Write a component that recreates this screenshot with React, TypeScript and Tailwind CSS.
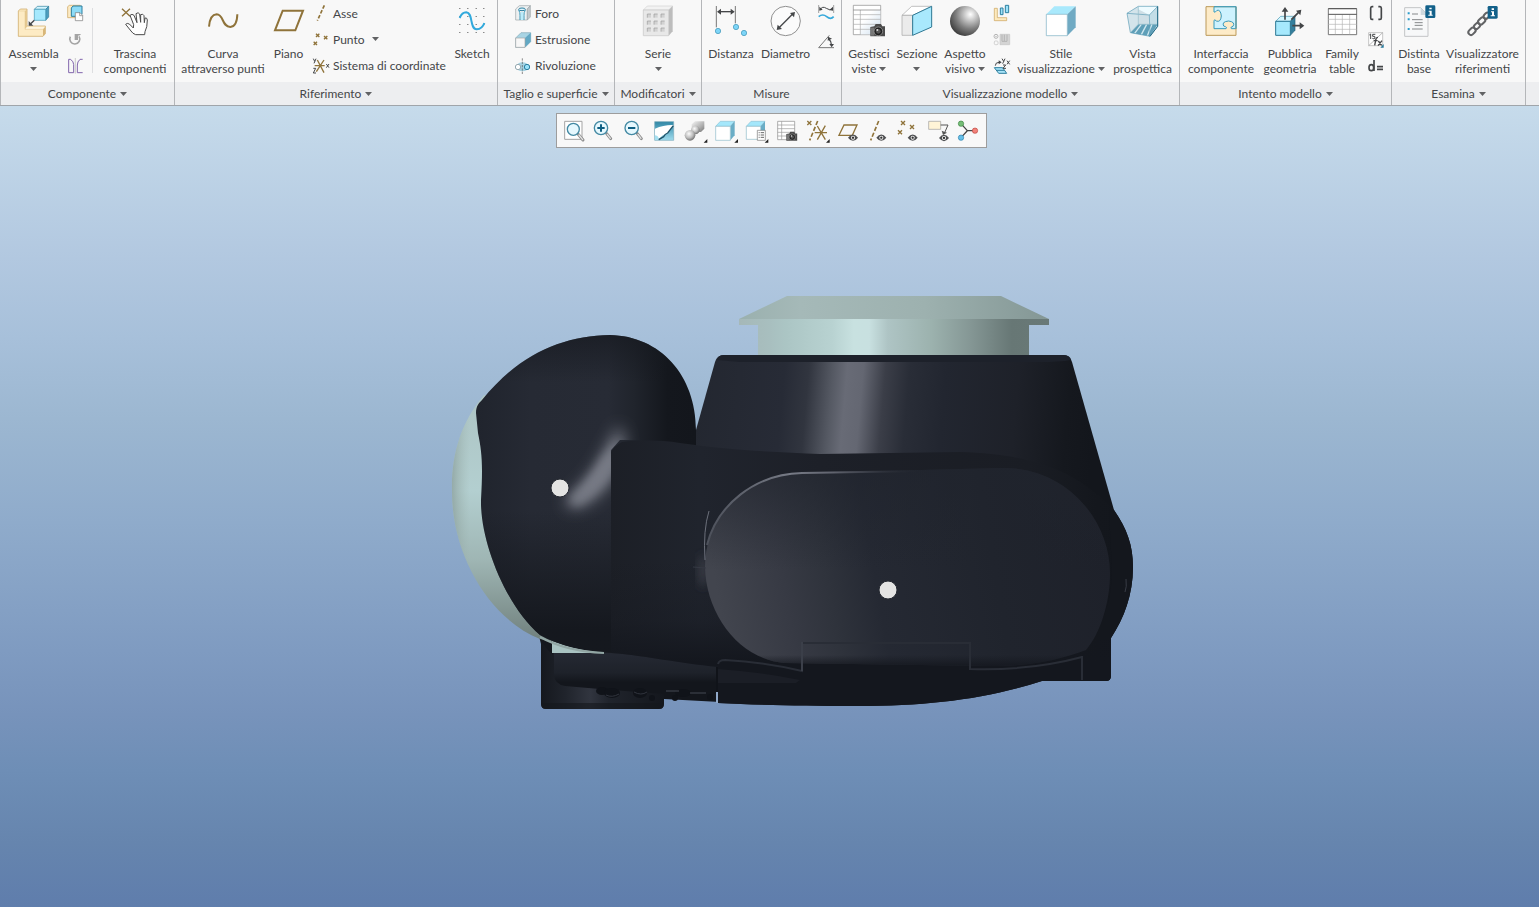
import type { ReactNode } from 'react';

const GOLD = '#8f733a';
const INK = '#444648';
const TEAL = '#2d7f9f';

function Caret({ className = '' }: { className?: string }) {
  return (
    <svg className={`inline-block shrink-0 ${className}`} width="7" height="4" viewBox="0 0 7 4" aria-hidden="true">
      <path d="M0 0H7L3.5 4Z" fill="#616264" />
    </svg>
  );
}

function Icon({ box, size = 32, children }: { box: string; size?: number; children: ReactNode }) {
  return (
    <svg className="shrink-0 overflow-visible" width={size} height={size} viewBox={box} fill="none" aria-hidden="true">
      {children}
    </svg>
  );
}

type BigProps = { className: string; icon: ReactNode; first: string; second?: string; menu?: boolean };

function BigButton({ className, icon, first, second, menu }: BigProps) {
  return (
    <button type="button" className={`flex shrink-0 flex-col items-center gap-[9px] pt-[5px] leading-[15px] whitespace-nowrap ${className}`}>
      {icon}
      <span className="flex flex-col items-center">
        <span>{first}</span>
        <span className="flex h-[15px] items-center justify-center gap-[3px]">
          {second}
          {menu && <Caret />}
        </span>
      </span>
    </button>
  );
}

function SmallButton({ icon, label, text, menu }: { icon: ReactNode; label?: string; text?: string; menu?: boolean }) {
  return (
    <button type="button" aria-label={label} className="flex h-[26px] items-center gap-1 whitespace-nowrap">
      {icon}
      {text && <span className="leading-[15px]">{text}</span>}
      {menu && <Caret className="ml-[3px]" />}
    </button>
  );
}

function SmallColumn({ className, children }: { className: string; children: ReactNode }) {
  return <div className={`flex shrink-0 flex-col ${className}`}>{children}</div>;
}

function Group({ className, title, menu = true, children }: { className: string; title: string; menu?: boolean; children: ReactNode }) {
  return (
    <section className={`flex shrink-0 flex-col border-r border-[#b4b6b9] ${className}`}>
      <div className="flex h-[82px]">{children}</div>
      <button type="button" className="flex h-[23px] items-center justify-center gap-1 bg-[#edeef0] whitespace-nowrap">
        {title}
        {menu && <Caret />}
      </button>
    </section>
  );
}

function Camera({ x, y, s = 1 }: { x: number; y: number; s?: number }) {
  return (
    <g transform={`translate(${x} ${y}) scale(${s})`}>
      <path d="M0 9L12 7L16 0H32L36 7H44V37H0Z" fill="#4b4b4b" />
      <path d="M2 11H12V35H2Z" fill="#777" />
      <circle cx="24" cy="22" r="13" fill="#202020" stroke="#aaa" strokeWidth="2" />
      <circle cx="24" cy="22" r="7" fill="#555" />
      <circle cx="21" cy="18" r="3" fill="#ddd" />
    </g>
  );
}

function InfoBadge({ x, y }: { x: number; y: number }) {
  return (
    <g transform={`translate(${x} ${y})`}>
      <rect width="30" height="38" rx="4" fill="#13618a" />
      <path d="M12 7H19V12H12ZM10 16H19V28H22V31H9V28H13V19H10Z" fill="#fff" />
    </g>
  );
}

function Cross({ x, y, r = 5, w = 4 }: { x: number; y: number; r?: number; w?: number }) {
  return <path d={`M${x - r} ${y - r}L${x + r} ${y + r}M${x + r} ${y - r}L${x - r} ${y + r}`} stroke={GOLD} strokeWidth={w} />;
}

function ComponentGroup() {
  return (
    <Group className="w-[175px] border-l" title="Componente">
      <BigButton
        className="w-[65px]"
        first="Assembla"
        menu
        icon={
          <Icon box="52 15 96 96">
            <path d="M53 33L59 27H79V78H134V101L127 109H53Z" fill="#fdebc4" stroke="#c9a057" strokeWidth="2" />
            <path d="M73 33L79 27V80L73 88Z" fill="#e5c88f" />
            <path d="M73 88L80 80H134L127 88Z" fill="#fff6df" />
            <path d="M127 88L134 80V101L127 109Z" fill="#d8b678" />
            <path d="M53 33H73V88H127" stroke="#e0c48e" strokeWidth="1.5" />
            <path d="M101 28L110 19H144L135 28Z" fill="#d3f5ff" stroke="#2f7f9c" strokeWidth="2" />
            <path d="M135 28L144 19V51L135 61Z" fill="#4d9dbd" stroke="#2f7f9c" strokeWidth="2" />
            <path d="M101 28H135V61H101Z" fill="#a6e9fd" stroke="#4197b5" strokeWidth="2" />
            <path d="M101 61L90 71" stroke={INK} strokeWidth="4" />
            <path d="M84 77V63L98 77Z" fill={INK} />
          </Icon>
        }
      />
      <SmallColumn className="w-[26px] pl-px">
        <SmallButton
          label="Crea componente"
          icon={
            <Icon size={16} box="201 15 48 48">
              <path d="M203 20L208 16H241V53H203Z" fill="#fdebc4" stroke="#c9a057" strokeWidth="2" />
              <path d="M214 24L219 18H246V42L240 49H214Z" fill="#8edcf7" stroke={TEAL} strokeWidth="3" />
              <path d="M226 38H240L248 46V62H226Z" fill="#fff" stroke="#777" strokeWidth="2" />
              <path d="M239 38V47H248" stroke="#777" strokeWidth="2" />
            </Icon>
          }
        />
        <SmallButton
          label="Rigenera"
          icon={
            <Icon size={16} box="201 93 48 48">
              <path d="M211 110A15 15 0 1 0 237 109" stroke="#a4a4a4" strokeWidth="5" />
              <path d="M224 102H243L240 106L234 107V120H224Z" fill="#a4a4a4" />
            </Icon>
          }
        />
        <SmallButton
          label="Specchia componente"
          icon={
            <Icon size={16} box="201 171 48 48">
              <path d="M206 178H212Q221 185 221 194V218H206Z" stroke="#8265ad" strokeWidth="3" />
              <path d="M248 178H240Q232 185 232 195V218H248" stroke="#8265ad" strokeWidth="3" />
              <path d="M226 174V221" stroke="#b5b5b5" strokeWidth="2" />
            </Icon>
          }
        />
      </SmallColumn>
      <div className="mt-2 h-[65px] w-px shrink-0 bg-[#dddee0]" />
      <BigButton
        className="ml-[3px] w-[78px]"
        first="Trascina"
        second="componenti"
        icon={
          <Icon box="355 15 96 96">
            <path d="M364 26L388 49M388 26L364 49" stroke={GOLD} strokeWidth="4" />
            <path
              d="M405 104H432L433 95Q440 82 440 60Q439 52 433 54L431 68L430 47Q427 40 420 44L420 67L417 42Q413 35 406 41L409 68L400 46Q394 40 388 46L399 74L398 84L386 72Q379 68 375 73L391 93Q396 101 405 104Z"
              fill="#fff"
              stroke="#4b4b4b"
              strokeWidth="3"
              strokeLinejoin="round"
            />
          </Icon>
        }
      />
    </Group>
  );
}

function ReferenceGroup() {
  return (
    <Group className="w-[323px]" title="Riferimento">
      <BigButton
        className="w-24"
        first="Curva"
        second="attraverso punti"
        icon={
          <Icon box="621 15 96 96">
            <path d="M627 80Q630 44 650 43C672 43 665 81 691 81Q711 80 712 43" stroke={GOLD} strokeWidth="6" />
          </Icon>
        }
      />
      <BigButton
        className="w-[35px]"
        first="Piano"
        icon={
          <Icon box="817 15 96 96">
            <path d="M846 32H907L884 91H823Z" stroke={GOLD} strokeWidth="6" />
          </Icon>
        }
      />
      <SmallColumn className="w-[148px] pl-[7px]">
        <SmallButton
          text="Asse"
          icon={
            <Icon size={16} box="39 15 48 48">
              <path d="M73 16L52 62" stroke={GOLD} strokeWidth="5" strokeDasharray="11 5" />
            </Icon>
          }
        />
        <SmallButton
          text="Punto"
          menu
          icon={
            <Icon size={16} box="39 93 48 48">
              <Cross x={53} y={106} />
              <Cross x={77} y={113} />
              <Cross x={46} y={130} />
            </Icon>
          }
        />
        <SmallButton
          text="Sistema di coordinate"
          icon={
            <Icon size={16} box="39 171 48 48">
              <path d="M44 197H74M49 215L72 180M52 180L72 218" stroke={GOLD} strokeWidth="4" />
              <path d="M40 176L44 184M48 176L42 190M40 205H47L40 219H48M79 192L87 203M87 192L79 203" stroke={INK} strokeWidth="3" />
            </Icon>
          }
        />
      </SmallColumn>
      <BigButton
        className="w-9"
        first="Sketch"
        icon={
          <Icon box="468 15 96 96">
            {[26, 50, 74, 98].map((y) =>
              [479, 503, 528, 551].map((x) => <rect key={`${x}-${y}`} x={x - 1} y={y - 2} width="3" height="3" fill="#555" />),
            )}
            <path d="M479 54Q486 37 499 37C520 38 508 87 530 88Q547 87 553 69" stroke="#31a9dc" strokeWidth="6" />
          </Icon>
        }
      />
    </Group>
  );
}

function CutGroup() {
  return (
    <Group className="w-[117px]" title="Taglio e superficie">
      <SmallColumn className="w-full pl-[17px]">
        <SmallButton
          text="Foro"
          icon={
            <Icon size={16} box="645 15 48 48">
              <path d="M647 27L658 17H691L682 27V60H647Z" fill="#edf0f1" stroke="#9ba4a8" strokeWidth="2" />
              <path d="M682 27L691 17V51L682 60Z" fill="#c2c8cb" stroke="#9ba4a8" strokeWidth="2" />
              <ellipse cx="666" cy="28" rx="10" ry="4" fill="#dff6ff" stroke={TEAL} strokeWidth="3" />
              <path d="M656 30Q661 38 660 46V60M676 30Q671 38 672 46V60" stroke="#3b9bbd" strokeWidth="3" />
              <path d="M663 36V60H669V36Z" fill="#b9ecfb" />
            </Icon>
          }
        />
        <SmallButton
          text="Estrusione"
          icon={
            <Icon size={16} box="645 93 48 48">
              <path d="M647 114L663 98H692V125L675 142H647Z" fill="#a8d4e4" stroke="#84a9b7" strokeWidth="2" />
              <path d="M675 114L692 98V125L675 142Z" fill="#62a8c4" />
              <path d="M647 114H675V142H647Z" fill="#f7f7f7" stroke="#a3a3a3" strokeWidth="2" />
            </Icon>
          }
        />
        <SmallButton
          text="Rivoluzione"
          icon={
            <Icon size={16} box="645 171 48 48">
              <path d="M655 190Q667 183 680 190V211Q667 217 655 211Z" fill="#a5d2e2" />
              <circle cx="654" cy="201" r="8" fill="#fff" stroke="#96aab2" strokeWidth="3" />
              <circle cx="681" cy="201" r="8" fill="#99e2fa" stroke={TEAL} strokeWidth="3" />
              <path d="M667 175V222" stroke="#555" strokeWidth="2" strokeDasharray="7 3" />
            </Icon>
          }
        />
      </SmallColumn>
    </Group>
  );
}

function ModifierGroup() {
  return (
    <Group className="w-[87px]" title="Modificatori">
      <BigButton
        className="w-[86px]"
        first="Serie"
        menu
        icon={
          <Icon box="126 15 96 96">
            <path d="M130 30L142 18H218L206 30Z" fill="#f2f2f2" stroke="#d2d2d2" strokeWidth="2" />
            <path d="M206 30L218 18V94L206 107Z" fill="#bdbdbd" />
            <path d="M130 30H206V107H130Z" fill="#e8e8e8" stroke="#c6c6c6" strokeWidth="2" />
            {[42, 63, 84].map((y) =>
              [142, 162, 183].map((x) => (
                <g key={`${x}-${y}`}>
                  <rect x={x} y={y} width="11" height="11" fill="#d2d2d2" />
                  <path d={`M${x} ${y + 11}V${y}H${x + 11}`} stroke="#9c9c9c" strokeWidth="2" />
                </g>
              )),
            )}
          </Icon>
        }
      />
    </Group>
  );
}

function MeasureGroup() {
  return (
    <Group className="w-[140px]" title="Misure" menu={false}>
      <BigButton
        className="w-[58px]"
        first="Distanza"
        icon={
          <Icon box="345 15 96 96">
            <path d="M349 18V82M406 18V70" stroke="#777" strokeWidth="3" />
            <path d="M356 35H400" stroke={INK} strokeWidth="4" />
            <path d="M351 35L363 26V44ZM404 35L392 26V44Z" fill={INK} />
            {[
              [354, 93],
              [408, 81],
              [432, 99],
            ].map(([x, y]) => (
              <circle key={x} cx={x} cy={y} r="8" fill="#7dd5f8" stroke="#3c93b4" strokeWidth="2" />
            ))}
          </Icon>
        }
      />
      <BigButton
        className="w-[51px]"
        first="Diametro"
        icon={
          <Icon box="508 15 96 96">
            <circle cx="555" cy="63" r="44" fill="#fbfbfb" stroke="#909090" strokeWidth="3" />
            <path d="M535 83L576 42" stroke={INK} strokeWidth="4" />
            <path d="M528 90L531 74L544 87ZM583 36L568 39L580 52Z" fill={INK} />
          </Icon>
        }
      />
      <SmallColumn className="pl-[7px]">
        <SmallButton
          label="Lunghezza"
          icon={
            <Icon size={16} box="654 15 48 48">
              <path d="M656 15V39M701 15V39" stroke="#777" strokeWidth="2" />
              <path d="M660 29Q667 17 679 25T697 27" stroke={INK} strokeWidth="3" />
              <path d="M658 32V20L668 29ZM699 32V20L688 30Z" fill={INK} />
              <path d="M656 50Q668 40 680 50T701 50" stroke="#36a9db" strokeWidth="5" />
            </Icon>
          }
        />
        <SmallButton
          label="Angolo"
          icon={
            <Icon size={16} box="654 93 48 48">
              <path d="M688 106L656 143H702" stroke="#777" strokeWidth="3" />
              <path d="M686 117Q693 122 694 134" stroke={INK} strokeWidth="4" />
              <path d="M683 122L684 110L696 116ZM688 132H702L695 142Z" fill={INK} />
            </Icon>
          }
        />
      </SmallColumn>
    </Group>
  );
}

function DisplayGroup() {
  return (
    <Group className="w-[338px]" title="Visualizzazione modello">
      <BigButton
        className="w-[54px]"
        first="Gestisci"
        second="viste"
        menu
        icon={
          <Icon box="759 15 96 96">
            <path d="M760 16H842V104H760Z" fill="#fff" stroke="#8a8a8a" strokeWidth="2" />
            <path d="M781 30H841V103H781Z" fill="url(#tableTint)" />
            <path d="M781 30V104M760 44H842M760 58H842M760 73H842M760 88H842" stroke="#aaa" strokeWidth="2" />
            <path d="M760 30H842" stroke="#777" strokeWidth="2" />
            <Camera x={811} y={72} />
          </Icon>
        }
      />
      <BigButton
        className="w-[42px]"
        first="Sezione"
        menu
        icon={
          <Icon box="3 15 96 96">
            <path d="M6 46L35 19H95L38 46Z" fill="#fff" stroke="#a5a5a5" strokeWidth="2" />
            <path d="M6 46H38V106H6Z" fill="#ebebeb" stroke="#a5a5a5" strokeWidth="2" />
            <path d="M38 46L95 19V81L38 106Z" fill="#a9e9fd" stroke="#2e7894" strokeWidth="3" />
          </Icon>
        }
      />
      <BigButton
        className="w-[54px]"
        first="Aspetto"
        second="visivo"
        menu
        icon={
          <Icon box="147 15 96 96">
            <circle cx="195" cy="63" r="45" fill="url(#sphere)" />
          </Icon>
        }
      />
      <SmallColumn className="w-5 pl-0.5">
        <SmallButton
          label="Vista esplosa"
          icon={
            <Icon size={16} box="282 15 48 48">
              <path d="M283 25H292V53H320V62H283Z" fill="#fdeabf" stroke="#c9a057" strokeWidth="2" />
              <path d="M301 24H309V44H301ZM316 16H326V38H316Z" fill="#9ce2fa" stroke={TEAL} strokeWidth="3" />
            </Icon>
          }
        />
        <SmallButton
          label="Stato combinato"
          icon={
            <Icon size={16} box="282 93 48 48">
              <circle cx="288" cy="109" r="6" stroke="#b4b4b4" strokeWidth="3" />
              <circle cx="288" cy="109" r="2" fill="#aaa" />
              <rect x="283" y="123" width="11" height="11" rx="3" stroke="#c0c0c0" strokeWidth="2" />
              <path d="M300 103H329V134H300Z" fill="#d4d4d4" stroke="#c4c4c4" strokeWidth="2" />
              <path d="M306 104V124H321V104M313 104V123" stroke="#b4b4b4" strokeWidth="3" />
            </Icon>
          }
        />
        <SmallButton
          label="Orientamento"
          icon={
            <Icon size={16} box="282 171 48 48">
              <path d="M283 203H308L320 220H296ZM289 211H313" fill="#a9e4f8" stroke={TEAL} strokeWidth="3" />
              <path d="M286 197Q286 187 297 187" stroke={INK} strokeWidth="3" />
              <path d="M296 181L305 187L296 193Z" fill={INK} />
              <path d="M306 176L311 184M315 176L308 191M321 182L329 193M329 182L321 193M309 195H317L309 205H318" stroke={INK} strokeWidth="3" />
            </Icon>
          }
        />
      </SmallColumn>
      <BigButton
        className="w-[98px]"
        first="Stile"
        second="visualizzazione"
        menu
        icon={
          <Icon box="435 15 96 96">
            <path d="M439 43L463 19H527L502 43Z" fill="#a9e9fc" />
            <path d="M502 43L527 19V82L502 107Z" fill="#70aac3" />
            <path d="M439 43H502V107H439Z" fill="#fff" stroke="#79aec3" strokeWidth="2" />
          </Icon>
        }
      />
      <BigButton
        className="w-[65px]"
        first="Vista"
        second="prospettica"
        icon={
          <Icon box="679 15 96 96">
            <path d="M679 40L713 19H771L746 45Z" fill="#eefbff" />
            <path d="M679 40L713 19V73L689 98Z" fill="#d3e4eb" />
            <path d="M713 28L746 45V73H713Z" fill="#cfdfe6" />
            <path d="M746 45L771 19V79L748 109Z" fill="#c3dde7" />
            <path d="M713 73H771L748 109L689 98Z" fill="#5f9fb8" />
            <path d="M722 73L702 100M738 73L722 104M754 73L740 107" stroke="#cfe7ef" strokeWidth="4" />
            <path d="M679 40L746 45L771 19V79L748 109L689 98ZM679 40L713 19H771M746 45L748 109" stroke="#5b9cb5" strokeWidth="2" />
            <path d="M713 19V73L689 98M713 73H771" stroke="#8fb9c9" strokeWidth="2" />
            <path d="M771 19V79L748 109" stroke="#236984" strokeWidth="3" />
          </Icon>
        }
      />
    </Group>
  );
}

function IntentGroup() {
  return (
    <Group className="w-[212px]" title="Intento modello">
      <BigButton
        className="w-[82px]"
        first="Interfaccia"
        second="componente"
        icon={
          <Icon box="74 15 96 96">
            <path d="M77 20H167V106H77Z" fill="#fdebc8" />
            <path
              d="M101 20H167V86H153Q148 82 158 79Q166 66 145 63Q123 65 130 78Q143 82 137 86H101V61Q103 57 108 63Q121 68 123 48Q121 28 110 31Q104 39 101 36Z"
              fill="#cdf2fe"
              stroke="#3999bb"
              strokeWidth="3"
            />
            <path d="M77 20H167V106H77Z" stroke="#bb995a" strokeWidth="3" />
            <path d="M101 20H167V86" stroke="#3ca0c4" strokeWidth="3" />
          </Icon>
        }
      />
      <BigButton
        className="w-14"
        first="Pubblica"
        second="geometria"
        icon={
          <Icon box="282 15 96 96">
            <path d="M287 64L302 49H345L331 64Z" fill="#d5f6ff" stroke="#4294af" strokeWidth="2" />
            <path d="M331 64L345 49V91L331 106Z" fill="#347f9d" stroke="#245f77" strokeWidth="2" />
            <path d="M287 64H331V106H287Z" fill="#a6e9fd" stroke="#2c7893" strokeWidth="3" />
            <path d="M315 59V31M334 59L355 38M337 77H363" stroke={INK} strokeWidth="5" />
            <path d="M315 21L305 35H325ZM364 29L348 32L361 46ZM373 77L359 67V88Z" fill={INK} />
          </Icon>
        }
      />
      <BigButton
        className="w-12"
        first="Family"
        second="table"
        icon={
          <Icon box="438 15 96 96">
            <path d="M445 26H530V104H445Z" fill="#fff" stroke="#777" strokeWidth="3" />
            <path d="M466 44V103M487 44V103M509 44V103M445 58H530M445 73H530M445 88H530" stroke="#b5b5b5" strokeWidth="2" />
            <path d="M445 43H530" stroke="#555" strokeWidth="3" />
            <path d="M445 26H530" stroke="#555" strokeWidth="3" />
          </Icon>
        }
      />
      <SmallColumn className="w-5 pl-0.5">
        <SmallButton
          label="Parametri"
          icon={
            <Icon size={16} box="564 15 48 48">
              <path d="M580 20H576Q572 20 572 25V53Q572 58 576 58H580M595 20H600Q604 20 604 25V53Q604 58 600 58H595" stroke={INK} strokeWidth="5" />
            </Icon>
          }
        />
        <SmallButton
          label="Relazioni tra quote"
          icon={
            <Icon size={16} box="564 93 48 48">
              <path d="M566 98H608V137H566Z" fill="#fff" stroke="#aaa" strokeWidth="2" />
              <path d="M608 98L566 137" stroke="#999" strokeWidth="2" />
              <path d="M568 105L572 102V117M586 103H578V109Q587 107 585 114Q582 118 577 115" stroke={INK} strokeWidth="3" />
              <path d="M594 112Q588 112 587 121L584 136M581 122H593M595 123L605 136M606 122L594 137" stroke={INK} strokeWidth="4" />
              <path d="M611 132V143H601Z" fill="#26789a" />
            </Icon>
          }
        />
        <SmallButton
          label="Relazioni"
          icon={
            <Icon size={16} box="564 171 48 48">
              <path d="M582 180V213" stroke={INK} strokeWidth="5" />
              <ellipse cx="574" cy="203" rx="7" ry="9" stroke={INK} strokeWidth="5" />
              <path d="M591 200H609M591 208H609" stroke={INK} strokeWidth="5" />
            </Icon>
          }
        />
      </SmallColumn>
    </Group>
  );
}

function InvestigateGroup() {
  return (
    <Group className="w-[134px]" title="Esamina">
      <BigButton
        className="w-[54px]"
        first="Distinta"
        second="base"
        icon={
          <Icon box="669 15 96 96">
            <path d="M674 23H722L744 45V109H674Z" fill="#f7f8f9" stroke="#c3c5c7" strokeWidth="3" />
            <path d="M722 23L744 45H722Z" fill="#cfd9de" />
            <path d="M683 37H689V43H683ZM683 55H689V61H683ZM683 84H689V90H683Z" fill="#2b9dcc" />
            <path d="M696 42H714M696 59H728M704 68H728M704 76H728M696 87H728" stroke="#85888a" strokeWidth="3" />
            <InfoBadge x={736} y={16} />
          </Icon>
        }
      />
      <BigButton
        className="w-[73px]"
        first="Visualizzatore"
        second="riferimenti"
        icon={
          <Icon box="859 15 96 96">
            <g stroke="#626365" strokeWidth="6">
              <rect x="-12" y="-8" width="24" height="16" rx="8" transform="translate(874 94) rotate(-45)" />
              <rect x="-10" y="-7" width="20" height="14" rx="7" transform="translate(889 78) rotate(-45)" />
              <rect x="-12" y="-8" width="24" height="16" rx="8" transform="translate(903 63) rotate(-45)" />
              <rect x="-10" y="-7" width="20" height="14" rx="7" transform="translate(918 47) rotate(-45)" />
            </g>
            <InfoBadge x={921} y={18} />
          </Icon>
        }
      />
    </Group>
  );
}

function Lens({ cx, cy, r }: { cx: number; cy: number; r: number }) {
  return (
    <g>
      <path d={`M${cx + r - 3} ${cy + r - 3}L${cx + 29} ${cy + 32}`} stroke="#8c8c8c" strokeWidth="9" strokeLinecap="round" />
      <path d={`M${cx + r - 1} ${cy + r - 1}L${cx + 28} ${cy + 31}`} stroke="#e4e4e4" strokeWidth="4" strokeLinecap="round" />
      <circle cx={cx} cy={cy} r={r} fill="#e6f8fe" stroke="#4389a3" strokeWidth="4" />
    </g>
  );
}

function Eye({ x, y }: { x: number; y: number }) {
  return (
    <g>
      <path d={`M${x - 15} ${y}Q${x} ${y - 19} ${x + 15} ${y}Q${x} ${y + 19} ${x - 15} ${y}Z`} fill="#4e4f51" />
      <circle cx={x} cy={y} r="6" fill="#fff" />
      <circle cx={x} cy={y} r="3.5" fill="#333" />
    </g>
  );
}

function MenuCorner({ x, y }: { x: number; y: number }) {
  return <path d={`M${x} ${y}V${y - 11}L${x - 11} ${y}Z`} fill="#222" />;
}

const viewTools: { label: string; box: string; art: ReactNode }[] = [
  {
    label: 'Riadatta',
    box: '33 31 72 72',
    art: (
      <>
        <path d="M44 38H96V92H44Z" stroke="#a4a4a4" strokeWidth="3" fill="#fff" />
        <Lens cx={70} cy={62} r={18} />
      </>
    ),
  },
  {
    label: 'Zoom avanti',
    box: '124 31 72 72',
    art: (
      <>
        <Lens cx={154} cy={58} r={20} />
        <path d="M143 58H165M154 47V69" stroke="#0e5f83" strokeWidth="6" />
      </>
    ),
  },
  {
    label: 'Zoom indietro',
    box: '215 31 72 72',
    art: (
      <>
        <Lens cx={244} cy={58} r={20} />
        <path d="M233 58H255" stroke="#0e5f83" strokeWidth="6" />
      </>
    ),
  },
  {
    label: 'Ridisegna',
    box: '306 31 72 72',
    art: (
      <>
        <path d="M314 39H371V95H314Z" fill="url(#repaint)" stroke="#7fabbb" strokeWidth="2" />
        <path d="M315 60Q342 48 370 49V52L353 74Q337 78 324 94H315Z" fill="#fff" />
        <path d="M315 80Q328 82 326 94H315Z" fill="#a5e0f1" />
        <path d="M370 51L353 73Q345 76 341 84L326 93" stroke="#1d5268" strokeWidth="4" />
      </>
    ),
  },
  {
    label: 'Qualità rendering',
    box: '397 31 72 72',
    art: (
      <>
        <path d="M423 47L433 38H461V60L451 70H423Z" fill="url(#metal)" />
        <circle cx="434" cy="64" r="13" fill="url(#ball)" />
        <circle cx="418" cy="80" r="16" fill="url(#ball)" />
        <MenuCorner x={470} y={102} />
      </>
    ),
  },
  {
    label: 'Stile di visualizzazione',
    box: '489 31 72 72',
    art: (
      <>
        <path d="M497 53L511 38H554L541 53Z" fill="#a4e7fb" stroke="#8fc3d4" strokeWidth="2" />
        <path d="M541 53L554 38V80L541 95Z" fill="#6aadc6" />
        <path d="M497 53H541V95H497Z" fill="#fff" stroke="#8db9c8" strokeWidth="2" />
        <MenuCorner x={564} y={102} />
      </>
    ),
  },
  {
    label: 'Orientamenti salvati',
    box: '580 31 72 72',
    art: (
      <>
        <path d="M590 53L604 38H646L633 53Z" fill="#a4e7fb" stroke="#8fc3d4" strokeWidth="2" />
        <path d="M633 53L646 38V80L633 92Z" fill="#6aadc6" />
        <path d="M590 53H633V92H590Z" fill="#fff" stroke="#8db9c8" strokeWidth="2" />
        <path d="M623 65H647V95H623Z" fill="#fff" stroke="#777" strokeWidth="2" />
        <path d="M627 72H630M633 72H643M627 79H630M633 79H643M627 86H630M633 86H643" stroke="#666" strokeWidth="3" />
        <MenuCorner x={656} y={102} />
      </>
    ),
  },
  {
    label: 'Gestione viste',
    box: '26 31 72 72',
    art: (
      <>
        <path d="M37 38H88V93H37Z" fill="#fff" stroke="#8a8a8a" strokeWidth="2" />
        <path d="M49 38V93M37 49H88M37 60H88M37 71H88M37 82H88" stroke="#999" strokeWidth="2" />
        <Camera x={63} y={69} s={0.74} />
      </>
    ),
  },
  {
    label: 'Filtri riferimenti',
    box: '117 31 72 72',
    art: (
      <>
        <Cross x={133} y={43} r={6} />
        <path d="M158 37L134 95" stroke={GOLD} strokeWidth="5" strokeDasharray="13 6" />
        <path d="M149 72H186M157 93L181 51M157 52L181 93" stroke={GOLD} strokeWidth="4" />
        <MenuCorner x={194} y={102} />
      </>
    ),
  },
  {
    label: 'Visualizza piani',
    box: '208 31 72 72',
    art: (
      <>
        <path d="M238 49H277L263 80H223Z" stroke={GOLD} strokeWidth="4" />
        <Eye x={265} y={87} />
      </>
    ),
  },
  {
    label: 'Visualizza assi',
    box: '299 31 72 72',
    art: (
      <>
        <path d="M340 37L316 95" stroke={GOLD} strokeWidth="5" strokeDasharray="13 6" />
        <Eye x={348} y={87} />
      </>
    ),
  },
  {
    label: 'Visualizza punti',
    box: '391 31 72 72',
    art: (
      <>
        <Cross x={415} y={43} r={6} />
        <Cross x={442} y={55} r={6} />
        <Cross x={406} y={71} r={6} />
        <Eye x={444} y={87} />
      </>
    ),
  },
  {
    label: 'Visualizza annotazioni',
    box: '482 31 72 72',
    art: (
      <>
        <path d="M490 38H526V62H490Z" fill="#fff4d7" stroke="#9d9d9d" strokeWidth="2" />
        <path d="M526 49H548L538 72" stroke="#555" strokeWidth="3" />
        <path d="M533 79L529 66L545 72Z" fill="#555" />
        <Eye x={536} y={88} />
      </>
    ),
  },
  {
    label: 'Centro di rotazione',
    box: '573 31 72 72',
    art: (
      <>
        <path d="M588 45L607 66L588 87M607 66H629" stroke="#454545" strokeWidth="4" />
        <circle cx="588" cy="45" r="8" fill="#76be78" stroke="#3b8340" strokeWidth="2" />
        <circle cx="588" cy="87" r="8" fill="#66bfe8" stroke="#2b7eaa" strokeWidth="2" />
        <circle cx="630" cy="66" r="8" fill="#f28179" stroke="#bd4740" strokeWidth="2" />
      </>
    ),
  },
];

function SharedPaints() {
  return (
    <svg className="absolute size-0" aria-hidden="true">
      <defs>
        <radialGradient id="sphere" cx="0.68" cy="0.28" r="0.8">
          <stop offset="0" stopColor="#fff" />
          <stop offset="0.2" stopColor="#d4d4d4" />
          <stop offset="0.6" stopColor="#7e7e7e" />
          <stop offset="1" stopColor="#383838" />
        </radialGradient>
        <radialGradient id="ball" cx="0.4" cy="0.35" r="0.65">
          <stop offset="0" stopColor="#fbfbfb" />
          <stop offset="0.6" stopColor="#bdbdbd" />
          <stop offset="1" stopColor="#747474" />
        </radialGradient>
        <linearGradient id="metal" x1="0" y1="0" x2="1" y2="1">
          <stop offset="0" stopColor="#f5f5f5" />
          <stop offset="0.6" stopColor="#b0b0b0" />
          <stop offset="1" stopColor="#777" />
        </linearGradient>
        <linearGradient id="tableTint" x1="0" y1="0" x2="1" y2="1">
          <stop offset="0.3" stopColor="#fff" />
          <stop offset="1" stopColor="#cfe0ef" />
        </linearGradient>
        <linearGradient id="repaint" x1="0" y1="0" x2="0" y2="1">
          <stop offset="0" stopColor="#2f86a5" />
          <stop offset="1" stopColor="#9fdcee" />
        </linearGradient>
      </defs>
    </svg>
  );
}

const PAD =
  'M705 567C705 515 748 473 802 473L1000 468C1066 466 1110 520 1110 573C1110 603 1100 634 1086 650C1060 660 1030 666 990 666L785 663C740 660 706 615 705 567Z';
const LOBE =
  'M476 413C476 406 479 403 482 400C520 353 563 336 610 335C660 336 696 375 696 430V446L613 640V653C585 652 560 646 540 635C505 605 480 540 481 500C483 465 482 452 478 433Z';

function Model() {
  return (
    <svg className="absolute inset-0 h-full w-full" viewBox="0 106 1539 801" role="img" aria-label="Modello 3D">
      <defs>
        <linearGradient id="capTop" x1="0" x2="1">
          <stop offset="0" stopColor="#9ab0ae" />
          <stop offset="0.2" stopColor="#a5b9b8" />
          <stop offset="0.6" stopColor="#9db1af" />
          <stop offset="1" stopColor="#849795" />
        </linearGradient>
        <linearGradient id="capSide" gradientUnits="userSpaceOnUse" x1="739" x2="1049" y1="0" y2="0">
          <stop offset="0" stopColor="#a5b8b8" />
          <stop offset="0.1" stopColor="#a8bfbf" />
          <stop offset="0.15" stopColor="#abc5c4" />
          <stop offset="0.3" stopColor="#b8d2d1" />
          <stop offset="0.37" stopColor="#c8e1e0" />
          <stop offset="0.42" stopColor="#c8e0e0" />
          <stop offset="0.48" stopColor="#aec4c4" />
          <stop offset="0.62" stopColor="#9cb2ae" />
          <stop offset="0.75" stopColor="#849694" />
          <stop offset="0.88" stopColor="#677775" />
          <stop offset="1" stopColor="#697977" />
        </linearGradient>
        <linearGradient id="cone" gradientUnits="userSpaceOnUse" x1="696" x2="1100" y1="0" y2="0" gradientTransform="translate(32 0) skewX(-5)">
          <stop offset="0" stopColor="#232730" />
          <stop offset="0.22" stopColor="#272b36" />
          <stop offset="0.28" stopColor="#31353f" />
          <stop offset="0.34" stopColor="#555963" />
          <stop offset="0.375" stopColor="#686b76" />
          <stop offset="0.415" stopColor="#646772" />
          <stop offset="0.47" stopColor="#3b3e48" />
          <stop offset="0.53" stopColor="#292d37" />
          <stop offset="0.62" stopColor="#222630" />
          <stop offset="0.8" stopColor="#1e2129" />
          <stop offset="0.93" stopColor="#15181e" />
          <stop offset="1" stopColor="#13161c" />
        </linearGradient>
        <linearGradient id="lobeX" gradientUnits="userSpaceOnUse" x1="476" x2="696" y1="0" y2="0">
          <stop offset="0" stopColor="#20242d" />
          <stop offset="0.25" stopColor="#262a34" />
          <stop offset="0.6" stopColor="#272b35" />
          <stop offset="0.72" stopColor="#20242c" />
          <stop offset="0.87" stopColor="#14171d" />
          <stop offset="1" stopColor="#13161c" />
        </linearGradient>
        <linearGradient id="lobeY" gradientUnits="userSpaceOnUse" x1="0" x2="0" y1="335" y2="655">
          <stop offset="0" stopColor="#14171d" stopOpacity="0.6" />
          <stop offset="0.15" stopColor="#14171d" stopOpacity="0" />
          <stop offset="0.55" stopColor="#14171d" stopOpacity="0" />
          <stop offset="0.92" stopColor="#14171d" stopOpacity="0.95" />
        </linearGradient>
        <linearGradient id="bodyX" gradientUnits="userSpaceOnUse" x1="611" x2="1133" y1="0" y2="0">
          <stop offset="0" stopColor="#1c1f26" />
          <stop offset="0.17" stopColor="#20242d" />
          <stop offset="0.4" stopColor="#1d2028" />
          <stop offset="0.8" stopColor="#1a1d24" />
          <stop offset="0.93" stopColor="#14171d" />
          <stop offset="1" stopColor="#13161c" />
        </linearGradient>
        <linearGradient id="bodyY" gradientUnits="userSpaceOnUse" x1="0" x2="0" y1="560" y2="662">
          <stop offset="0" stopColor="#14171e" stopOpacity="0" />
          <stop offset="0.6" stopColor="#14171e" stopOpacity="0.3" />
          <stop offset="1" stopColor="#14171e" />
        </linearGradient>
        <linearGradient id="padFill" gradientUnits="userSpaceOnUse" x1="720" x2="1110" y1="610" y2="540">
          <stop offset="0" stopColor="#42454e" />
          <stop offset="0.17" stopColor="#373a44" />
          <stop offset="0.28" stopColor="#2f333c" />
          <stop offset="0.4" stopColor="#252933" />
          <stop offset="0.7" stopColor="#20242d" />
          <stop offset="1" stopColor="#1e212a" />
        </linearGradient>
        <linearGradient id="padTop" gradientUnits="userSpaceOnUse" x1="0" x2="0" y1="468" y2="570">
          <stop offset="0" stopColor="#20242d" stopOpacity="0.65" />
          <stop offset="1" stopColor="#20242d" stopOpacity="0" />
        </linearGradient>
        <linearGradient id="padBottom" gradientUnits="userSpaceOnUse" x1="0" x2="0" y1="655" y2="668">
          <stop offset="0" stopColor="#14171e" stopOpacity="0" />
          <stop offset="1" stopColor="#14171e" />
        </linearGradient>
        <linearGradient id="rim" gradientUnits="userSpaceOnUse" x1="705" x2="920" y1="0" y2="0">
          <stop offset="0" stopColor="#4c505a" />
          <stop offset="0.4" stopColor="#777b86" />
          <stop offset="0.6" stopColor="#60636e" />
          <stop offset="1" stopColor="#262a33" stopOpacity="0" />
        </linearGradient>
        <linearGradient id="mint" gradientUnits="userSpaceOnUse" x1="0" x2="0" y1="410" y2="640">
          <stop offset="0" stopColor="#aec6c6" />
          <stop offset="0.35" stopColor="#b3cfd0" />
          <stop offset="0.65" stopColor="#9fb6b4" />
          <stop offset="1" stopColor="#71817e" />
        </linearGradient>
        <linearGradient id="mintEdge" gradientUnits="userSpaceOnUse" x1="451" x2="483" y1="0" y2="0">
          <stop offset="0" stopColor="#81938f" stopOpacity="0.65" />
          <stop offset="0.6" stopColor="#9eb3af" stopOpacity="0" />
        </linearGradient>
        <linearGradient id="tray" gradientUnits="userSpaceOnUse" x1="541" x2="664" y1="0" y2="0">
          <stop offset="0" stopColor="#15181e" />
          <stop offset="0.2" stopColor="#20242c" />
          <stop offset="0.4" stopColor="#31353f" />
          <stop offset="0.55" stopColor="#20242c" />
          <stop offset="1" stopColor="#14171d" />
        </linearGradient>
        <linearGradient id="shelf" gradientUnits="userSpaceOnUse" x1="0" x2="0" y1="655" y2="687">
          <stop offset="0" stopColor="#242832" />
          <stop offset="0.55" stopColor="#1e222a" />
          <stop offset="0.85" stopColor="#13161c" />
        </linearGradient>
        <filter id="soft" x="-50%" y="-50%" width="200%" height="200%">
          <feGaussianBlur stdDeviation="8" />
        </filter>
        <filter id="softer" x="-50%" y="-50%" width="200%" height="200%">
          <feGaussianBlur stdDeviation="5" />
        </filter>
        <clipPath id="lobeClip">
          <path d="M470 330H700V440H620L611 450V660H470Z" />
        </clipPath>
        <clipPath id="padClip">
          <path d={PAD} />
        </clipPath>
      </defs>

      <path d="M787 296H1001L1049 319H739Z" fill="url(#capTop)" />
      <path d="M739 319H1049V325H1029V356H758V325H739Z" fill="url(#capSide)" />

      <path d="M696 430L715 362Q717 355 724 355H1063Q1070 355 1072 362L1114 510V560H696Z" fill="url(#cone)" />
      <path d="M717 360Q718 355 724 355H1063Q1070 355 1071 360Q1060 362 1040 362H740Z" fill="#1d212a" />

      <path d="M539 636H664V704Q664 709 659 709H546Q541 709 541 704V644Z" fill="url(#tray)" />
      <path d="M539 636L553 640V655Q545 648 539 636Z" fill="#14171d" />
      <path d="M541 703H664V704Q664 709 659 709H546Q541 709 541 704Z" fill="#14171d" fillOpacity="0.6" />
      <path d="M554 645H720V702L664 699V694Q610 690 565 686Q554 684 554 674Z" fill="url(#shelf)" />
      <g fill="#101319">
        <ellipse cx="602" cy="691" rx="6" ry="4" />
        <ellipse cx="612" cy="693" rx="8" ry="5" />
        <ellipse cx="640" cy="693" rx="7" ry="5" />
        <ellipse cx="652" cy="698" rx="3" ry="3" />
        <ellipse cx="683" cy="693" rx="8" ry="4" />
        <circle cx="675" cy="698" r="3" />
        <circle cx="710" cy="697" r="3" />
      </g>
      <path d="M606 695Q612 698 619 694M634 692Q641 696 647 692" stroke="#30343d" strokeWidth="1" fill="none" />
      <path d="M666 691H679M690 693H706" stroke="#454952" strokeWidth="1" />
      <path d="M552 638H604V653H552Z" fill="#a9c3c2" />

      <path d="M484 395C461 422 451 455 452 492C452 556 490 619 540 639L560 643V420Z" fill="url(#mint)" />
      <path d="M484 395C461 422 451 455 452 492C452 556 490 619 540 639L560 643V420Z" fill="url(#mintEdge)" />

      <path d={LOBE} fill="url(#lobeX)" />
      <path d={LOBE} fill="url(#lobeY)" />
      <g clipPath="url(#lobeClip)">
        <path d="M564 500Q586 484 600 460L619 425L625 440L614 478Q594 505 572 509Z" fill="#777a85" filter="url(#soft)" />
        <path d="M570 500Q590 480 602 459L618 440V462Q598 494 576 505Z" fill="#777a85" filter="url(#softer)" />
      </g>
      <path d="M540 637C560 648 582 652 604 653" fill="none" stroke="#92a6a4" strokeWidth="2" />

      <path
        d="M611 452Q614 446 622 442C640 440 660 440 680 443C735 451 780 452 820 454L960 452C1040 454 1080 475 1114 510C1127 529 1133 545 1133 567C1133 595 1124 618 1111 638V676Q1111 681 1106 681H1042C985 699 930 706 857 706C800 706 760 705 718 703V667C675 663 650 656 611 653Z"
        fill="url(#bodyX)"
      />
      <path d="M611 560H1133Q1133 605 1111 638V676Q1111 681 1106 681H1042C985 699 930 706 857 706C800 706 760 705 718 703V667C675 663 650 656 611 653Z" fill="url(#bodyY)" />
      <path d="M718 669Q760 672 800 680L796 683H718Z" fill="#1b1e26" />
      <path d="M1109 510L1114 510C1127 529 1133 545 1133 567C1133 595 1124 618 1111 638V640H1088Q1112 615 1112 570Z" fill="#14171d" />
      <ellipse cx="703" cy="571" rx="4" ry="16" fill="#3c404a" filter="url(#softer)" />

      <path d={PAD} fill="url(#padFill)" />
      <g clipPath="url(#padClip)">
        <path d="M700 466H1120V570H700Z" fill="url(#padTop)" />
        <path d="M700 655H1120V670H700Z" fill="url(#padBottom)" />
      </g>
      <path d="M707 545C717 505 755 474 802 473L920 471" fill="none" stroke="url(#rim)" strokeWidth="2" />
      <path d="M705 560Q703 530 709 511" fill="none" stroke="#6c707b" strokeWidth="1" />
      <path d="M693 567L706 568" stroke="#353943" strokeWidth="1" />
      <path d="M718 664Q719 660 725 660Q765 662 802 671V643H970V669Q1030 671 1082 657" fill="none" stroke="#292d36" strokeWidth="2" />
      <path d="M802 642V671" stroke="#3b3f49" strokeWidth="2" />
      <path d="M1082 656V680" stroke="#292d36" strokeWidth="2" />
      <path d="M717 667V692" stroke="#101319" strokeWidth="2" />
      <path d="M717 692V703" stroke="#91a9c9" strokeWidth="2" />
      <path d="M1126 579Q1127 587 1125 592" stroke="#383c45" strokeWidth="1" fill="none" />

      <circle cx="560" cy="488" r="9" fill="#e4e4e3" stroke="#262a32" strokeWidth="1" />
      <circle cx="888" cy="590" r="9" fill="#e4e4e3" stroke="#262a32" strokeWidth="1" />
    </svg>
  );
}

export default function App() {
  return (
    <div className="flex min-h-screen flex-col overflow-hidden font-['Lato','Open_Sans',sans-serif] text-[12px] text-[#444648]">
      <SharedPaints />
      <header className="flex shrink-0 border-b border-[#a0a5aa] bg-[#f8f8f8]">
        <ComponentGroup />
        <ReferenceGroup />
        <CutGroup />
        <ModifierGroup />
        <MeasureGroup />
        <DisplayGroup />
        <IntentGroup />
        <InvestigateGroup />
        <div className="flex flex-1 flex-col justify-end">
          <div className="h-[23px] bg-[#edeef0]" />
        </div>
      </header>
      <main className="relative flex flex-1 flex-col items-center bg-[linear-gradient(to_bottom,#c6dbeb_0%,#b2c8e0_19%,#a7c0da_29%,#9cb7d1_39%,#8fabcb_52%,#7f9bc1_68%,#7793bb_76%,#6e8eb6_83%,#6685ae_92%,#5f7dac_100%)] pt-[7px] pl-1">
        <Model />
        <div role="toolbar" aria-label="Vista" className="relative flex h-[35px] w-[431px] items-center justify-between border border-[#9d9d9d] bg-[#f8f8f8] pr-1.5 pl-1">
          {viewTools.map((tool) => (
            <button key={tool.label} type="button" aria-label={tool.label} className="flex">
              <Icon size={24} box={tool.box}>
                {tool.art}
              </Icon>
            </button>
          ))}
        </div>
      </main>
    </div>
  );
}
